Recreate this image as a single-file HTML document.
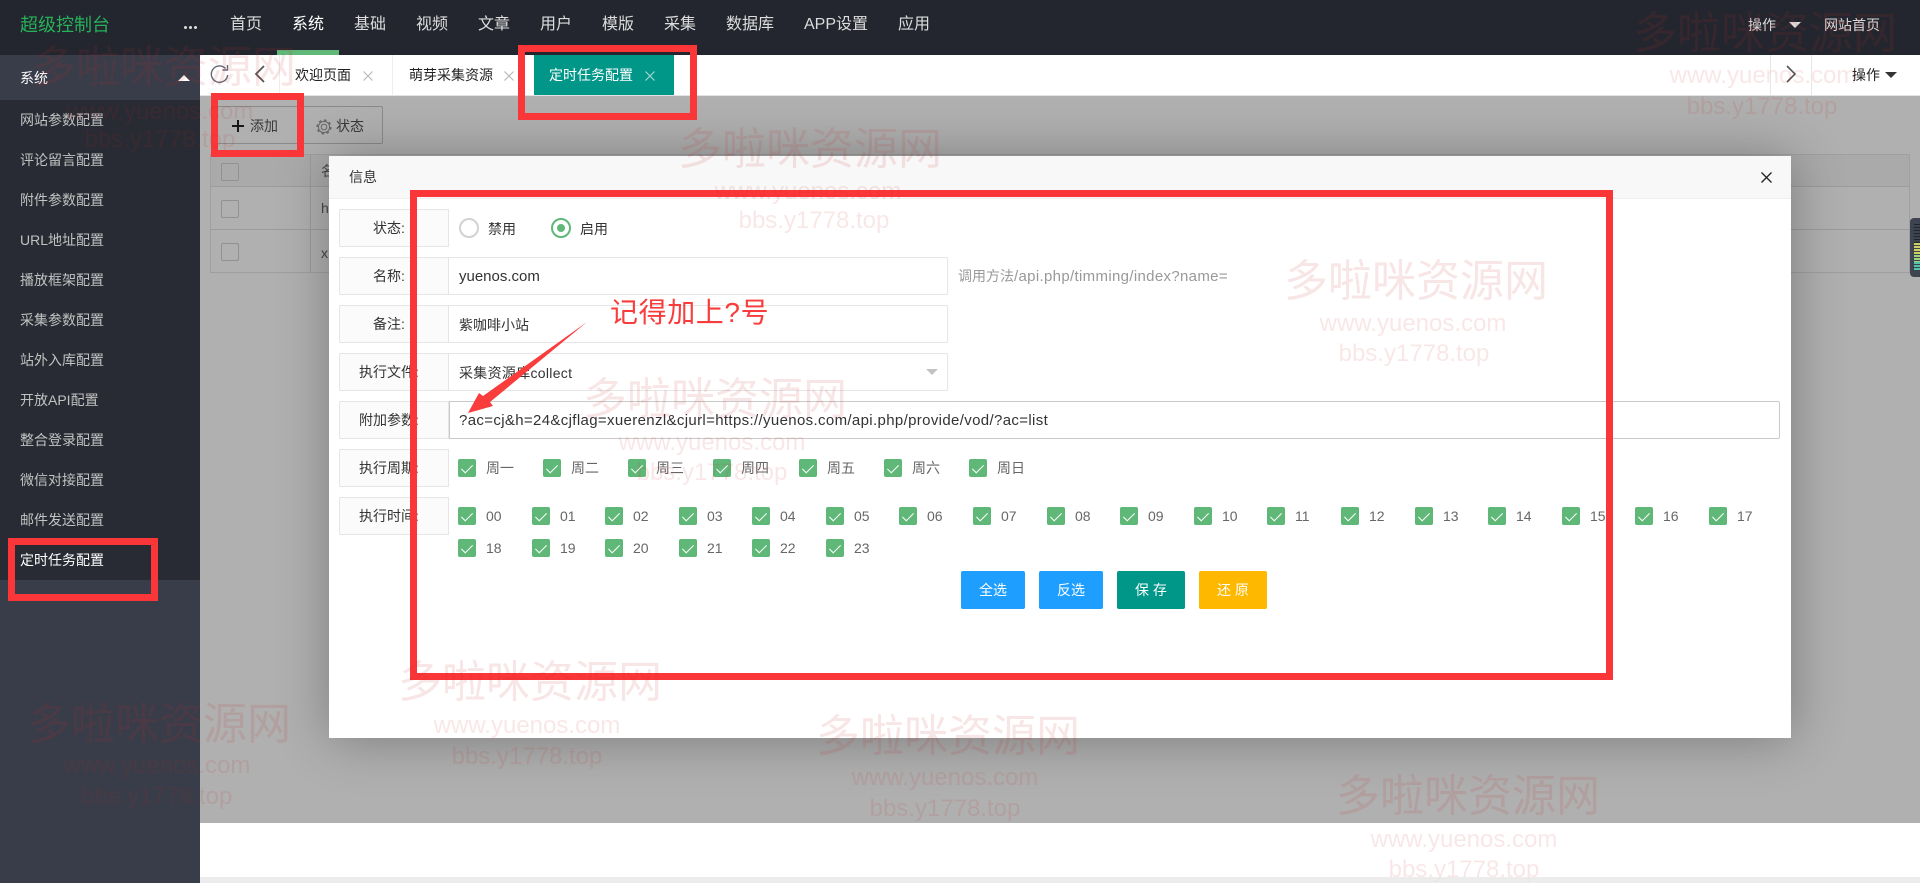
<!DOCTYPE html>
<html lang="zh"><head><meta charset="utf-8"><title>超级控制台</title>
<style>
html,body{margin:0;padding:0;width:1920px;height:883px;overflow:hidden;background:#fff}
body{position:relative;font:14px/20px "Liberation Sans","Noto Sans CJK SC",sans-serif;color:#333}
div,span,svg{position:absolute;box-sizing:border-box}
.t{white-space:nowrap;line-height:20px}
.n{color:#ddd;font-size:16px;top:15px}
.m{left:20px;color:#c2c2c2;white-space:nowrap}
.l{left:339px;width:110px;height:38px;background:#fbfbfb;border:1px solid #e6e6e6;border-radius:2px 0 0 2px}
.i{left:449px;width:499px;height:38px;background:#fff;border:1px solid #e6e6e6;border-left:0;border-radius:0 2px 2px 0}
.f{white-space:nowrap;font-size:15px;color:#333}
.c{width:18px;height:18px;background:#5fb878;border-radius:2px}
.c:after{content:"";position:absolute;left:6px;top:3px;width:5px;height:10px;border:solid #fff;border-width:0 1px 1px 0;transform:rotate(45deg)}
.g{color:#666;white-space:nowrap}
.b{top:571px;height:38px;border-radius:2px;color:#fff;text-align:center;line-height:38px}
.r{border:7px solid #fb3639}
.w1,.w2{width:500px;text-align:center;white-space:nowrap;pointer-events:none}
.w1{font-size:44px;line-height:50px;color:rgba(200,40,40,.12)}
.w2{font-size:24px;line-height:30px;font-family:"Liberation Sans",sans-serif;color:rgba(200,40,40,.11)}
</style></head><body>

<!-- header -->
<div style="left:0;top:0;width:1920px;height:55px;background:#23262e"></div>
<div class="t" style="left:20px;top:15px;font-size:18px;color:#26b15a">超级控制台</div>
<div style="left:184px;top:26px;width:3px;height:3px;background:#ddd;border-radius:50%;box-shadow:5px 0 #ddd,10px 0 #ddd"></div>
<div class="t n" style="left:230px">首页</div>
<div class="t n" style="left:292px;color:#fff">系统</div>
<div class="t n" style="left:354px">基础</div>
<div class="t n" style="left:416px">视频</div>
<div class="t n" style="left:478px">文章</div>
<div class="t n" style="left:540px">用户</div>
<div class="t n" style="left:602px">模版</div>
<div class="t n" style="left:664px">采集</div>
<div class="t n" style="left:726px">数据库</div>
<div class="t n" style="left:804px">APP设置</div>
<div class="t n" style="left:898px">应用</div>
<div style="left:277px;top:50px;width:62px;height:5px;background:#5fb878"></div>
<div class="t" style="left:1748px;top:15px;color:#ddd">操作</div>
<div style="left:1789px;top:22px;width:0;height:0;border:6px solid transparent;border-top-color:#ddd;border-bottom:0"></div>
<div class="t" style="left:1824px;top:15px;color:#ddd">网站首页</div>

<!-- sidebar -->
<div style="left:0;top:55px;width:200px;height:828px;background:#393d49"></div>
<div style="left:0;top:100px;width:200px;height:480px;background:#282b33"></div>
<div class="t m" style="top:68px;color:#fff">系统</div>
<div style="left:178px;top:75px;width:0;height:0;border:6px solid transparent;border-bottom-color:#fff;border-top:0"></div>
<div class="t m" style="top:110px">网站参数配置</div>
<div class="t m" style="top:150px">评论留言配置</div>
<div class="t m" style="top:190px">附件参数配置</div>
<div class="t m" style="top:230px">URL地址配置</div>
<div class="t m" style="top:270px">播放框架配置</div>
<div class="t m" style="top:310px">采集参数配置</div>
<div class="t m" style="top:350px">站外入库配置</div>
<div class="t m" style="top:390px">开放API配置</div>
<div class="t m" style="top:430px">整合登录配置</div>
<div class="t m" style="top:470px">微信对接配置</div>
<div class="t m" style="top:510px">邮件发送配置</div>
<div class="t m" style="top:550px;color:#fff">定时任务配置</div>

<!-- tab bar -->
<div style="left:200px;top:55px;width:1720px;height:41px;background:#fff;border-bottom:1px solid #e2e2e2"></div>
<svg style="left:208px;top:62px" width="24" height="24" viewBox="0 0 24 24" fill="none" stroke="#667" stroke-width="1.4"><path d="M17.5 6.5A8.2 8.2 0 1 0 19.7 13"/><path d="M19.5 3v5h-5"/></svg>
<svg style="left:252px;top:64px" width="16" height="20" viewBox="0 0 16 20" fill="none" stroke="#555" stroke-width="1.8"><path d="M12 2L4 10l8 8"/></svg>
<div style="left:279px;top:55px;width:1px;height:40px;background:#eee"></div>
<div class="t" style="left:295px;top:65px;color:#222">欢迎页面</div>
<svg style="left:363px;top:71px" width="10" height="10" viewBox="0 0 10 10" stroke="#bbb" stroke-width="1.2"><path d="M.5.5l9 9M9.5.5l-9 9"/></svg>
<div style="left:392px;top:55px;width:1px;height:40px;background:#eee"></div>
<div class="t" style="left:409px;top:65px;color:#222">萌芽采集资源</div>
<svg style="left:504px;top:71px" width="10" height="10" viewBox="0 0 10 10" stroke="#bbb" stroke-width="1.2"><path d="M.5.5l9 9M9.5.5l-9 9"/></svg>
<div style="left:534px;top:55px;width:140px;height:40px;background:#009688"></div>
<div class="t" style="left:549px;top:65px;color:#fff">定时任务配置</div>
<svg style="left:645px;top:71px" width="10" height="10" viewBox="0 0 10 10" stroke="#a5d5d0" stroke-width="1.2"><path d="M.5.5l9 9M9.5.5l-9 9"/></svg>
<div style="left:1770px;top:55px;width:1px;height:40px;background:#e6e6e6"></div>
<div style="left:1811px;top:55px;width:1px;height:40px;background:#e6e6e6"></div>
<svg style="left:1783px;top:64px" width="16" height="20" viewBox="0 0 16 20" fill="none" stroke="#555" stroke-width="1.6"><path d="M4 2l8 8-8 8"/></svg>
<div class="t" style="left:1852px;top:65px;color:#222">操作</div>
<div style="left:1885px;top:72px;width:0;height:0;border:6px solid transparent;border-top-color:#333;border-bottom:0"></div>

<!-- content under overlay -->
<div style="left:200px;top:96px;width:1720px;height:727px;background:#fff"></div>
<div style="left:211px;top:106px;width:172px;height:38px;border:1px solid #c9c9c9;border-radius:2px"></div>
<div style="left:303px;top:106px;width:1px;height:38px;background:#c9c9c9"></div>
<svg style="left:231px;top:119px" width="14" height="14" viewBox="0 0 14 14" stroke="#222" stroke-width="2"><path d="M7 1v12M1 7h12"/></svg>
<div class="t" style="left:250px;top:116px;color:#555">添加</div>
<svg style="left:316px;top:119px" width="16" height="16" viewBox="0 0 16 16" fill="none" stroke="#999"><circle cx="8" cy="8" r="2.8"/><circle cx="8" cy="8" r="5.6" stroke-width="1"/><circle cx="8" cy="8" r="6.8" stroke-width="1.6" stroke-dasharray="2.6 2.7"/></svg>
<div class="t" style="left:336px;top:116px;color:#555">状态</div>
<div style="left:210px;top:154px;width:1700px;height:119px;border:1px solid #e6e6e6;background:#fff"></div>
<div style="left:211px;top:155px;width:1698px;height:31px;background:#f7f7f7"></div>
<div style="left:211px;top:186px;width:1698px;height:1px;background:#e2e2e2"></div>
<div style="left:211px;top:229px;width:1698px;height:1px;background:#e2e2e2"></div>
<div style="left:310px;top:155px;width:1px;height:117px;background:#e2e2e2"></div>
<div style="left:221px;top:163px;width:18px;height:18px;border:1px solid #d2d2d2;border-radius:2px"></div>
<div style="left:221px;top:200px;width:18px;height:18px;border:1px solid #d2d2d2;border-radius:2px"></div>
<div style="left:221px;top:243px;width:18px;height:18px;border:1px solid #d2d2d2;border-radius:2px"></div>
<div class="t" style="left:321px;top:161px;color:#666">名</div>
<div class="t" style="left:321px;top:198px;color:#666">h</div>
<div class="t" style="left:321px;top:243px;color:#666">x</div>
<!-- overlay -->
<div style="left:200px;top:96px;width:1720px;height:727px;background:rgba(0,0,0,.31)"></div>
<!-- floating widget -->
<div style="left:1910px;top:218px;width:10px;height:59px;background:#3e4350;border-radius:4px 0 0 4px"></div>
<div style="left:1914px;top:224px;width:6px;height:19px;background:repeating-linear-gradient(#22252c 0 1px,#3e4350 1px 3px)"></div>
<div style="left:1914px;top:243px;width:6px;height:12px;background:repeating-linear-gradient(#cfd062 0 2px,#3e4350 2px 3px)"></div>
<div style="left:1914px;top:255px;width:6px;height:7px;background:repeating-linear-gradient(#9fd07a 0 2px,#3e4350 2px 3px)"></div>
<div style="left:1914px;top:262px;width:6px;height:9px;background:repeating-linear-gradient(#4fc4a8 0 2px,#3e4350 2px 3px)"></div>

<!-- modal -->
<div style="left:329px;top:156px;width:1462px;height:582px;background:#fff;box-shadow:1px 1px 50px rgba(0,0,0,.3)"></div>
<div style="left:329px;top:156px;width:1462px;height:43px;background:#f8f8f8;border-bottom:1px solid #eee"></div>
<div class="t" style="left:349px;top:167px">信息</div>
<svg style="left:1761px;top:172px" width="11" height="11" viewBox="0 0 11 11" stroke="#222" stroke-width="1.3"><path d="M.5.5l10 10M10.5.5l-10 10"/></svg>

<div class="l" style="top:209px"></div><div class="t" style="left:373px;top:218px">状态:</div>
<div style="left:459px;top:218px;width:20px;height:20px;border:2px solid #d2d2d2;border-radius:50%;background:#fff"></div>
<div class="t" style="left:488px;top:219px">禁用</div>
<div style="left:551px;top:218px;width:20px;height:20px;border:2px solid #5fb878;border-radius:50%;background:#fff"></div>
<div style="left:557px;top:224px;width:8px;height:8px;background:#5fb878;border-radius:50%"></div>
<div class="t" style="left:580px;top:219px">启用</div>

<div class="l" style="top:257px"></div><div class="t" style="left:373px;top:266px">名称:</div>
<div class="i" style="top:257px"></div><div class="t f" style="left:459px;top:267px">yuenos.com</div>
<div class="t" style="left:958px;top:266px;color:#999">调用方法<span style="position:static;font-size:15px;letter-spacing:.33px">/api.php/timming/index?name=</span></div>

<div class="l" style="top:305px"></div><div class="t" style="left:373px;top:314px">备注:</div>
<div class="i" style="top:305px"></div><div class="t" style="left:459px;top:315px">紫咖啡小站</div>

<div class="l" style="top:353px"></div><div class="t" style="left:359px;top:362px">执行文件:</div>
<div class="i" style="top:353px"></div><div class="t f" style="left:459px;top:363px;font-size:14px;letter-spacing:.3px">采集资源库collect</div>
<div style="left:926px;top:369px;width:0;height:0;border:6px solid transparent;border-top-color:#c2c2c2;border-bottom:0"></div>

<div class="l" style="top:401px"></div><div class="t" style="left:359px;top:410px">附加参数:</div>
<div class="i" style="top:401px;width:1331px;border-color:#c9c9c9;border-left:1px solid #c9c9c9"></div>
<div class="t f" style="left:459px;top:411px;letter-spacing:.35px">?ac=cj&amp;h=24&amp;cjflag=xuerenzl&amp;cjurl=https://yuenos.com/api.php/provide/vod/?ac=list</div>

<div class="l" style="top:449px"></div><div class="t" style="left:359px;top:458px">执行周期:</div>
<div class="c" style="left:458px;top:459px"></div><div class="t g" style="left:486px;top:458px">周一</div>
<div class="c" style="left:543px;top:459px"></div><div class="t g" style="left:571px;top:458px">周二</div>
<div class="c" style="left:628px;top:459px"></div><div class="t g" style="left:656px;top:458px">周三</div>
<div class="c" style="left:713px;top:459px"></div><div class="t g" style="left:741px;top:458px">周四</div>
<div class="c" style="left:799px;top:459px"></div><div class="t g" style="left:827px;top:458px">周五</div>
<div class="c" style="left:884px;top:459px"></div><div class="t g" style="left:912px;top:458px">周六</div>
<div class="c" style="left:969px;top:459px"></div><div class="t g" style="left:997px;top:458px">周日</div>

<div class="l" style="top:497px"></div><div class="t" style="left:359px;top:506px">执行时间:</div>
<div class="c" style="left:458px;top:507px"></div><div class="t g" style="left:486px;top:506px">00</div>
<div class="c" style="left:532px;top:507px"></div><div class="t g" style="left:560px;top:506px">01</div>
<div class="c" style="left:605px;top:507px"></div><div class="t g" style="left:633px;top:506px">02</div>
<div class="c" style="left:679px;top:507px"></div><div class="t g" style="left:707px;top:506px">03</div>
<div class="c" style="left:752px;top:507px"></div><div class="t g" style="left:780px;top:506px">04</div>
<div class="c" style="left:826px;top:507px"></div><div class="t g" style="left:854px;top:506px">05</div>
<div class="c" style="left:899px;top:507px"></div><div class="t g" style="left:927px;top:506px">06</div>
<div class="c" style="left:973px;top:507px"></div><div class="t g" style="left:1001px;top:506px">07</div>
<div class="c" style="left:1047px;top:507px"></div><div class="t g" style="left:1075px;top:506px">08</div>
<div class="c" style="left:1120px;top:507px"></div><div class="t g" style="left:1148px;top:506px">09</div>
<div class="c" style="left:1194px;top:507px"></div><div class="t g" style="left:1222px;top:506px">10</div>
<div class="c" style="left:1267px;top:507px"></div><div class="t g" style="left:1295px;top:506px">11</div>
<div class="c" style="left:1341px;top:507px"></div><div class="t g" style="left:1369px;top:506px">12</div>
<div class="c" style="left:1415px;top:507px"></div><div class="t g" style="left:1443px;top:506px">13</div>
<div class="c" style="left:1488px;top:507px"></div><div class="t g" style="left:1516px;top:506px">14</div>
<div class="c" style="left:1562px;top:507px"></div><div class="t g" style="left:1590px;top:506px">15</div>
<div class="c" style="left:1635px;top:507px"></div><div class="t g" style="left:1663px;top:506px">16</div>
<div class="c" style="left:1709px;top:507px"></div><div class="t g" style="left:1737px;top:506px">17</div>
<div class="c" style="left:458px;top:539px"></div><div class="t g" style="left:486px;top:538px">18</div>
<div class="c" style="left:532px;top:539px"></div><div class="t g" style="left:560px;top:538px">19</div>
<div class="c" style="left:605px;top:539px"></div><div class="t g" style="left:633px;top:538px">20</div>
<div class="c" style="left:679px;top:539px"></div><div class="t g" style="left:707px;top:538px">21</div>
<div class="c" style="left:752px;top:539px"></div><div class="t g" style="left:780px;top:538px">22</div>
<div class="c" style="left:826px;top:539px"></div><div class="t g" style="left:854px;top:538px">23</div>

<div class="b" style="left:961px;width:64px;background:#1e9fff">全选</div>
<div class="b" style="left:1039px;width:64px;background:#1e9fff">反选</div>
<div class="b" style="left:1117px;width:68px;background:#009688">保 存</div>
<div class="b" style="left:1199px;width:68px;background:#ffb800">还 原</div>

<!-- red annotations -->
<div class="r" style="left:518px;top:45px;width:179px;height:75px"></div>
<div class="r" style="left:211px;top:93px;width:93px;height:64px"></div>
<div class="r" style="left:8px;top:538px;width:150px;height:63px"></div>
<div class="r" style="left:410px;top:190px;width:1203px;height:490px"></div>
<div class="t" style="left:610px;top:295px;font-size:28px;line-height:36px;letter-spacing:.6px;color:#f93c3c">记得加上?号</div>
<svg style="left:0;top:0" width="1920" height="883"><polygon fill="#f93c3c" points="587,322 483,396 479,393 468,413 493,406 490,402"/></svg>

<!-- watermarks -->
<div class="w1" style="left:1515px;top:9px">多啦咪资源网</div><div class="w2" style="left:1513px;top:61px">www.yuenos.com</div><div class="w2" style="left:1512px;top:92px">bbs.y1778.top</div>
<div class="w1" style="left:-86px;top:43px">多啦咪资源网</div><div class="w2" style="left:-90px;top:97px">www.yuenos.com</div><div class="w2" style="left:-90px;top:125px">bbs.y1778.top</div>
<div class="w1" style="left:560px;top:125px">多啦咪资源网</div><div class="w2" style="left:558px;top:177px">www.yuenos.com</div><div class="w2" style="left:564px;top:206px">bbs.y1778.top</div>
<div class="w1" style="left:1166px;top:257px">多啦咪资源网</div><div class="w2" style="left:1163px;top:309px">www.yuenos.com</div><div class="w2" style="left:1164px;top:339px">bbs.y1778.top</div>
<div class="w1" style="left:465px;top:375px">多啦咪资源网</div><div class="w2" style="left:462px;top:428px">www.yuenos.com</div><div class="w2" style="left:462px;top:458px">bbs.y1778.top</div>
<div class="w1" style="left:280px;top:658px">多啦咪资源网</div><div class="w2" style="left:277px;top:711px">www.yuenos.com</div><div class="w2" style="left:277px;top:742px">bbs.y1778.top</div>
<div class="w1" style="left:-91px;top:700px">多啦咪资源网</div><div class="w2" style="left:-93px;top:751px">www.yuenos.com</div><div class="w2" style="left:-93px;top:782px">bbs.y1778.top</div>
<div class="w1" style="left:698px;top:712px">多啦咪资源网</div><div class="w2" style="left:695px;top:763px">www.yuenos.com</div><div class="w2" style="left:695px;top:794px">bbs.y1778.top</div>
<div class="w1" style="left:1218px;top:772px">多啦咪资源网</div><div class="w2" style="left:1214px;top:825px">www.yuenos.com</div><div class="w2" style="left:1214px;top:855px">bbs.y1778.top</div>

<!-- bottom strip -->
<div style="left:200px;top:877px;width:1720px;height:6px;background:rgba(230,230,230,.75)"></div>
</body></html>
